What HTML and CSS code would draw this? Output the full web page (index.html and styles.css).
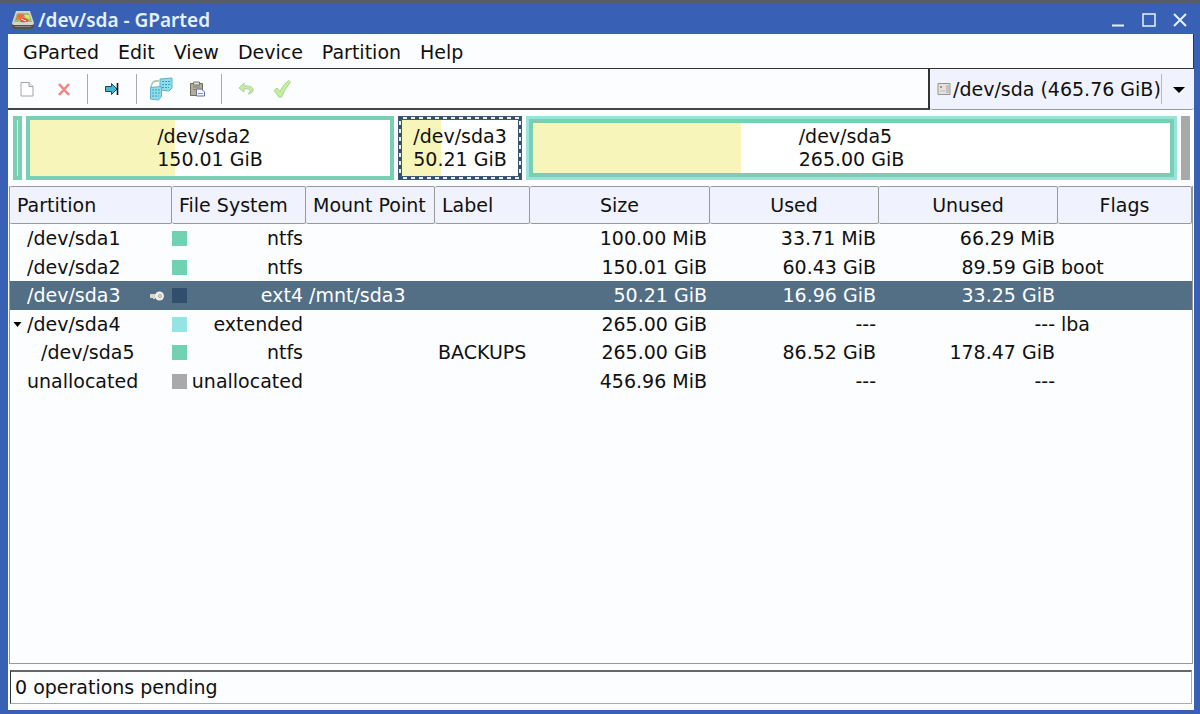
FILE: index.html
```html
<!DOCTYPE html>
<html lang="en">
<head>
<meta charset="utf-8">
<title>/dev/sda - GParted</title>
<link rel="stylesheet" href="styles.css">
</head>
<body>
<div class="window">
  <header class="titlebar">
    <svg class="app-icon" viewBox="0 0 22 18">
      <path d="M0 12h22v4q0 2-2 2H2q-2 0-2-2z" fill="#55524d"/>
      <path d="M4 0h14l4 12q0 2-2 2H2q-2 0-2-2z" fill="#d4d3cf"/>
      <path d="M5 2h12l3 9H2z" fill="#8fc867"/>
      <path d="M5 4q5-3 8 1l-4 3-5 1z" fill="#ef6a4c"/>
      <path d="M8 8q5-3 9 2-4 2-8 1z" fill="#e34a3c"/>
      <path d="M12 4l5 0 1 4-4-1z" fill="#f2dc72"/>
      <path d="M9 8l5 2" stroke="#fff" fill="none"/>
      <path d="M3 15.500h16" stroke="#8a8781"/>
    </svg>
    <h1 class="title">/dev/sda - GParted</h1>
    <div class="window-buttons">
      <button class="window-button" aria-label="Minimize"><svg viewBox="0 0 14 14"><path d="M1 12.500h12" stroke-width="2"/></svg></button>
      <button class="window-button" aria-label="Maximize"><svg viewBox="0 0 14 14"><path d="M1 1h12v12H1z"/></svg></button>
      <button class="window-button" aria-label="Close"><svg viewBox="0 0 14 14"><path d="M1 1l12 12M13 1L1 13" stroke-width="2"/></svg></button>
    </div>
  </header>
  <main class="content">
    <nav class="menubar">
      <button class="menu">GParted</button>
      <button class="menu">Edit</button>
      <button class="menu">View</button>
      <button class="menu">Device</button>
      <button class="menu">Partition</button>
      <button class="menu">Help</button>
    </nav>
    <div class="toolbar-row">
      <div class="toolbar">
        <button class="tool" aria-label="New" disabled><svg viewBox="0 0 24 24"><path d="M6 5.500h8l4 4v9.500H6z" fill="#fff" stroke="#a3a3a3"/><path d="M14 5.500v4h4" fill="#eee" stroke="#a3a3a3"/></svg></button>
        <button class="tool" aria-label="Delete" disabled><svg viewBox="0 0 24 24"><path d="M8 7l10 11M18 7L8 18" stroke="#f08383" stroke-width="2.600" fill="none"/></svg></button>
        <span class="separator"></span>
        <button class="tool" aria-label="Resize or move"><svg viewBox="0 0 24 24"><path d="M5.500 9.500h6v-3l5.500 5.500-5.500 5.500v-3h-6z" fill="#45b5d3" stroke="#174a5e"/><path d="M17.500 6v12" stroke="#111" stroke-width="1.600"/></svg></button>
        <span class="separator"></span>
        <button class="tool" aria-label="Copy"><svg viewBox="0 0 24 24"><path d="M11 2l12-1v10l-3 3-9-1z" fill="#8fddeb" stroke="#5fb4c8"/><path d="M2 10q1-7 8-6" fill="none" stroke="#a5c9a8" stroke-width="1.600"/><path d="M1.500 10.500l11-1v10l-3 3.500-8-1z" fill="#8fddeb" stroke="#5fb4c8"/><path d="M13 4.500h8M13 7.500h8M13 10.500h7M3 13h8M3 16h8M3 19h7" stroke="#3a9dbd" stroke-dasharray="2 1"/></svg></button>
        <button class="tool" aria-label="Paste"><svg viewBox="0 0 24 24"><path d="M5.500 6.500h12v12h-12z" fill="#b1ad96" stroke="#716e60"/><path d="M8.500 5h6v3h-6z" fill="#ddd" stroke="#777"/><path d="M8 10h7M8 12.500h5" stroke="#8b876f"/><path d="M11.500 12h5l3 3v4h-8z" fill="#f5f7ff" stroke="#6470a5"/><path d="M13 16.500h5" stroke="#8792bd"/></svg></button>
        <span class="separator"></span>
        <button class="tool" aria-label="Undo" disabled><svg viewBox="0 0 24 24"><path d="M10 6l-5 5 5 4v-3q5-1 6 1t-2 4q6-1 5-5.500Q17 8.500 10 9z" fill="#c7ebab" stroke="#acd394"/></svg></button>
        <button class="tool" aria-label="Apply" disabled><svg viewBox="0 0 24 24"><path d="M4 13.500l3-2.500 3 3.500q3-7 8.500-11l2 1.500Q15 12 11.500 20H9z" fill="#c3f09f" stroke="#a9d58d"/></svg></button>
      </div>
      <div class="device">
        <svg class="device-icon" viewBox="0 0 14 14"><path d="M1 1.500h12v11H1z" fill="#e4e2df" stroke="#96938f"/><path d="M9 3h3v8H9z" fill="#c3c1bd"/><path d="M3 4h2v2H3z" fill="#cf8468"/><path d="M3 9h5" stroke="#bbb"/></svg>
        <select class="device-select" aria-label="Device"><option>/dev/sda (465.76 GiB)</option></select>
        <svg class="device-arrow" viewBox="0 0 12 6"><path d="M0 0h12L6 6z"/></svg>
      </div>
    </div>
    <section class="disk" aria-label="Disk layout">
      <div class="part ntfs"></div>
      <div class="part ntfs"><div class="used" style="width:40.3%"></div><p class="label">/dev/sda2<br>150.01 GiB</p></div>
      <div class="part selected"><div class="used" style="width:34%"></div><p class="label">/dev/sda3<br>50.21 GiB</p></div>
      <div class="extended-box"><div class="part inner ntfs"><div class="used" style="width:32.6%"></div><p class="label">/dev/sda5<br>265.00 GiB</p></div></div>
      <div class="part-free"></div>
    </section>
    <div class="list">
      <table class="partitions">
        <colgroup><col class="col-partition"><col class="col-fs"><col class="col-mount"><col class="col-label"><col class="col-size"><col class="col-used"><col class="col-unused"><col></colgroup>
        <thead><tr><th>Partition</th><th>File System</th><th>Mount Point</th><th>Label</th><th class="mid">Size</th><th class="mid">Used</th><th class="mid">Unused</th><th class="mid">Flags</th></tr></thead>
        <tbody>
          <tr><td><div class="name">/dev/sda1</div></td><td class="fs-cell"><div class="fs"><i class="swatch green"></i>ntfs</div></td><td></td><td></td><td class="num">100.00 MiB</td><td class="num">33.71 MiB</td><td class="num">66.29 MiB</td><td></td></tr>
          <tr><td><div class="name">/dev/sda2</div></td><td class="fs-cell"><div class="fs"><i class="swatch green"></i>ntfs</div></td><td></td><td></td><td class="num">150.01 GiB</td><td class="num">60.43 GiB</td><td class="num">89.59 GiB</td><td>boot</td></tr>
          <tr class="current"><td><div class="name">/dev/sda3<svg class="key" viewBox="0 0 14 10"><path d="M0 3h7v4H5v1H3V7H0z" fill="#d9d6cc"/><circle cx="9.500" cy="5" r="4.500" fill="#efeee6"/><circle cx="10" cy="5" r="1.500" fill="none" stroke="#a5a294"/></svg></div></td><td class="fs-cell"><div class="fs"><i class="swatch navy"></i>ext4</div></td><td>/mnt/sda3</td><td></td><td class="num">50.21 GiB</td><td class="num">16.96 GiB</td><td class="num">33.25 GiB</td><td></td></tr>
          <tr><td><div class="name parent"><svg class="expander" viewBox="0 0 8 5"><path d="M0 0h8L4 5z"/></svg>/dev/sda4</div></td><td class="fs-cell"><div class="fs"><i class="swatch cyan"></i>extended</div></td><td></td><td></td><td class="num">265.00 GiB</td><td class="num">---</td><td class="num">---</td><td>lba</td></tr>
          <tr><td><div class="name child">/dev/sda5</div></td><td class="fs-cell"><div class="fs"><i class="swatch green"></i>ntfs</div></td><td></td><td>BACKUPS</td><td class="num">265.00 GiB</td><td class="num">86.52 GiB</td><td class="num">178.47 GiB</td><td></td></tr>
          <tr><td><div class="name">unallocated</div></td><td class="fs-cell"><div class="fs"><i class="swatch gray"></i>unallocated</div></td><td></td><td></td><td class="num">456.96 MiB</td><td class="num">---</td><td class="num">---</td><td></td></tr>
        </tbody>
      </table>
    </div>
    <footer class="status">0 operations pending</footer>
  </main>
</div>
</body>
</html>
```
FILE: styles.css
```css
* { box-sizing: border-box; }
body {
  margin: 0;
  background: #535d68;
  color: #101010;
  font: 19px/23px "DejaVu Sans", sans-serif;
}
button {
  padding: 0;
  border: 0;
  background: none;
  color: inherit;
  font: inherit;
}
svg { display: block; }
.window {
  display: flex;
  flex-direction: column;
  height: 100vh;
  padding: 0 6px 4px 8px;
  border-top: 4px solid #555d66;
  background: #3860b5;
}
.titlebar {
  display: flex;
  align-items: center;
  height: 30px;
  padding: 2px 7px 0 4px;
  color: #e4f2ff;
}
.app-icon { width: 22px; height: 18px; }
.title {
  flex: 1;
  margin: 0 0 0 4px;
  font: 600 19px/24px "Noto Sans", sans-serif;
}
.window-buttons { display: flex; gap: 17px; }
.window-button svg {
  width: 14px;
  height: 14px;
  fill: none;
  stroke: #e4f2ff;
  stroke-width: 1.5;
}
.content {
  display: flex;
  flex: 1;
  flex-direction: column;
  min-height: 0;
  background: #fcfdff;
}
.menubar {
  display: flex;
  gap: 19px;
  height: 35px;
  padding: 2px 15px 0;
  border-right: 1px solid #333;
  border-bottom: 1px solid #333;
}
.toolbar-row { display: flex; height: 41px; }
.toolbar {
  display: flex;
  flex: 1;
  align-items: center;
  padding-left: 7px;
  border-right: 2px solid #333;
  border-bottom: 2px solid #444;
}
.tool { margin-right: 12px; }
.tool svg { width: 24px; height: 24px; }
.separator {
  width: 1px;
  height: 30px;
  margin-right: 12px;
  background: #aaa;
}
.device {
  display: grid;
  grid-template-columns: 23px 1fr 33px;
  align-items: center;
  width: 264px;
  border-bottom: 1px solid #999;
  border-radius: 3px;
  background: #f0f3fd;
}
.device-icon {
  grid-area: 1 / 1;
  width: 14px;
  height: 14px;
  margin-left: 7px;
  z-index: 1;
}
.device-select {
  grid-area: 1 / 1 / 2 / 4;
  width: 100%;
  height: 36px;
  padding: 0 0 0 23px;
  border: 0;
  appearance: none;
  background: transparent;
  color: inherit;
  font: inherit;
}
.device-arrow {
  grid-area: 1 / 3;
  justify-self: end;
  box-sizing: content-box;
  width: 12px;
  height: 6px;
  padding: 13px 9px 11px 11px;
  border-left: 1px solid #bbb;
  pointer-events: none;
}
.disk {
  display: grid;
  grid-template-columns: 9px 368fr 124fr 651fr 9px;
  gap: 4px;
  height: 76px;
  padding: 6px 4px 6px 5px;
}
.part {
  display: grid;
  grid-template: 100% / 100%;
  align-items: center;
  justify-items: center;
  background: #fff;
}
.ntfs { border: 4px solid #78cfb1; }
.extended-box {
  padding: 3px;
  background: #98e3da;
}
.inner { height: 100%; }
.part-free { background: #a9a9a9; }
.selected {
  padding: 4px;
  background:
    repeating-linear-gradient(90deg, #344f6e 0 4px, #e9f2e0 4px 8px) 1px 1px / calc(100% - 2px) 2px no-repeat,
    repeating-linear-gradient(90deg, #344f6e 0 4px, #e9f2e0 4px 8px) 1px calc(100% - 1px) / calc(100% - 2px) 2px no-repeat,
    repeating-linear-gradient(#344f6e 0 4px, #e9f2e0 4px 8px) 1px 1px / 2px calc(100% - 2px) no-repeat,
    repeating-linear-gradient(#344f6e 0 4px, #e9f2e0 4px 8px) calc(100% - 1px) 1px / 2px calc(100% - 2px) no-repeat,
    linear-gradient(#fff, #fff) 4px 4px / calc(100% - 8px) calc(100% - 8px) no-repeat,
    #3f5878;
}
.used {
  grid-area: 1 / 1;
  justify-self: start;
  height: 100%;
  background: #f7f5ba;
}
.label { grid-area: 1 / 1; margin: 0; z-index: 1; }
.list {
  flex: 1;
  min-height: 0;
  margin: 0 1px 6px 1px;
  border: 1px solid #999;
  border-top: 0;
  overflow: hidden;
}
.partitions {
  width: 100%;
  table-layout: fixed;
  border-collapse: separate;
  border-spacing: 0;
}
.col-partition { width: 162px; }
.col-fs { width: 134px; }
.col-mount { width: 129px; }
.col-label { width: 95px; }
.col-size { width: 180px; }
.col-used { width: 169px; }
.col-unused { width: 179px; }
.partitions th {
  height: 38px;
  padding: 0 7px;
  border: 1px solid #999;
  border-left-width: 0;
  border-radius: 2px;
  background: #f0f3fd;
  font-weight: normal;
  text-align: left;
  white-space: nowrap;
}
.partitions .mid { text-align: center; }
.partitions tbody tr { height: 29px; }
.partitions tbody tr:nth-child(even) { height: 28px; }
.partitions td { padding: 0 3px; white-space: nowrap; }
.partitions .fs-cell { padding-left: 0; }
.partitions .num { text-align: right; }
.current { background: #526f86; color: #fff; }
.name {
  display: flex;
  align-items: center;
  justify-content: space-between;
  padding: 0 5px 0 14px;
}
.parent { justify-content: flex-start; gap: 5px; padding-left: 0; }
.child { padding-left: 28px; }
.expander { width: 9px; height: 5px; }
.key { width: 14px; height: 10px; }
.fs {
  display: flex;
  align-items: center;
  justify-content: space-between;
}
.swatch { width: 15px; height: 15px; }
.green { background: #70d2b1; }
.navy { background: #314e6c; }
.cyan { background: #95e3e2; }
.gray { background: #a9a9ab; }
.status {
  height: 34px;
  margin: 0 2px 6px 2px;
  padding: 4px;
  border: 1px solid #aaa;
  border-top: 2px solid #666;
  border-left-color: #333;
}
```
